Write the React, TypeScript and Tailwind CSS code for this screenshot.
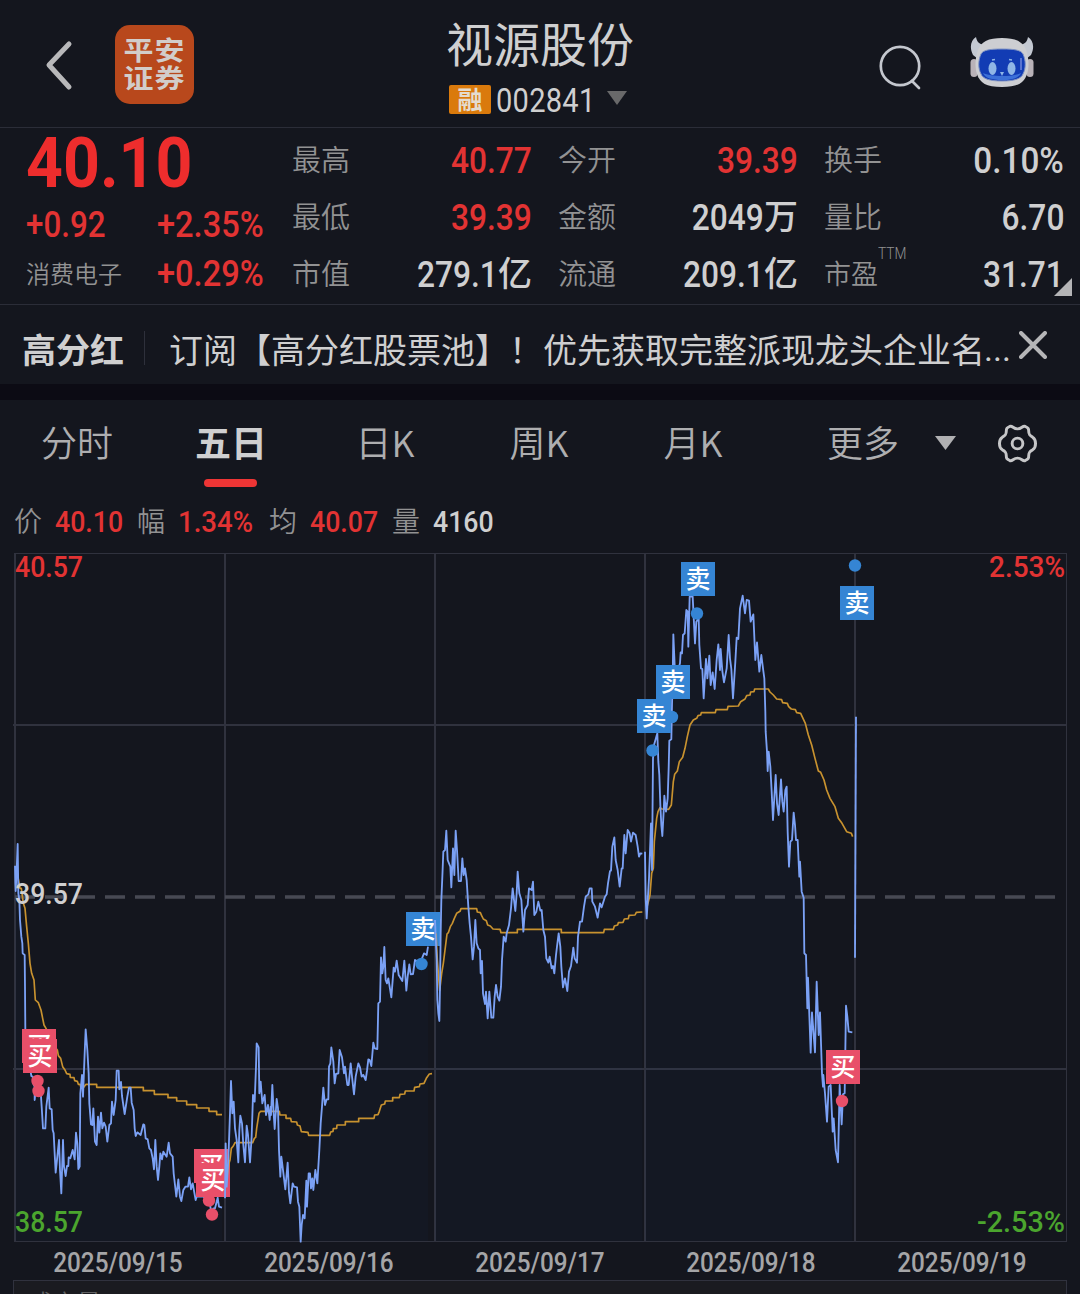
import type { ReactNode } from 'react';
import clsx from 'clsx';

type Tone = 'red' | 'white';

const TONES: Record<Tone, string> = {
  red: 'text-[#e23333]',
  white: 'text-[#cfcfd0]',
};

const STATS: { label: string; value: string; unit?: string; tone: Tone; sup?: string }[] = [
  { label: '最高', value: '40.77', tone: 'red' },
  { label: '今开', value: '39.39', tone: 'red' },
  { label: '换手', value: '0.10%', tone: 'white' },
  { label: '最低', value: '39.39', tone: 'red' },
  { label: '金额', value: '2049', unit: '万', tone: 'white' },
  { label: '量比', value: '6.70', tone: 'white' },
  { label: '市值', value: '279.1', unit: '亿', tone: 'white' },
  { label: '流通', value: '209.1', unit: '亿', tone: 'white' },
  { label: '市盈', value: '31.71', tone: 'white', sup: 'TTM' },
];

const TABS = ['分时', '五日', '日K', '周K', '月K'];

const DATES = ['2025/09/15', '2025/09/16', '2025/09/17', '2025/09/18', '2025/09/19'];

// Each session is stored in thirds of a pixel, relative to its own origin.
const SESSIONS = [
  {
    x: 0,
    y: 820,
    price:
      '45,137 46,190 47,213 50,150 53,72 55,220 58,240 60,300 64,350 67,370 68,400 74,405 75,500 76,627 80,700 92,755 94,768 98,770 100,790 104,800 104,840 108,800 122,815 125,860 129,925 136,925 139,860 146,803 149,865 155,868 158,930 161,940 164,1000 167,1058 172,1010 177,960 180,1050 184,1120 189,960 192,1040 197,1068 201,1038 205,1038 206,1012 211,1015 218,990 224,1018 228,938 232,970 235,1047 239,1040 241,820 246,765 249,830 254,700 257,628 262,690 266,760 268,850 273,913 277,915 280,865 285,965 290,975 294,890 298,938 303,878 307,925 312,908 317,920 322,965 328,915 333,910 336,845 341,885 347,840 350,752 356,752 358,808 363,786 366,828 374,882 382,830 387,803 392,803 395,848 401,870 404,925 407,948 412,937 422,945 430,913 433,915 437,955 443,958 448,985 453,990 458,1015 462,1048 466,960 470,1040 474,1080 478,1040 481,1000 486,1018 490,995 500,1010 506,968 510,1000 518,1010 521,1060 525,1095 529,1130 535,1078 540,1130 544,1143 550,1110 556,1100 564,1100 568,1072 573,1108 578,1090 587,1140 590,1130 610,1130 627,1140 635,1180 640,1165 645,1165 653,1133 657,1160 666,1163',
    avg: '52,160 60,205 64,205 70,250 75,265 80,320 85,370 90,430 95,460 102,480 106,540 115,548 123,570 128,595 132,615 138,625 150,650 160,675 172,690 175,707 182,715 188,740 195,750 200,761 210,763 211,772 222,773 224,782 232,784 235,793 240,793 243,803 250,803 258,793 290,793 290,802 430,802 430,812 463,812 463,823 504,823 504,833 530,833 530,843 560,843 560,854 590,854 590,864 627,864 627,874 650,874 650,884 666,884',
    marks: [
      { kind: 'buy', x: 22, y: 1029, dot: [37.5, 1081] },
      { kind: 'buy', x: 23, y: 1039, dot: [38.5, 1091] },
      { kind: 'buy', x: 194, y: 1149, dot: [209, 1200.5] },
      { kind: 'buy', x: 196, y: 1163, dot: [212, 1214.5] },
    ],
  },
  {
    x: 220,
    y: 820,
    price:
      '15,1135 17,970 20,1100 25,1020 30,880 33,783 37,880 41,845 45,925 50,960 55,1027 58,930 61,887 66,910 70,975 75,1027 80,917 84,945 90,1027 95,950 99,825 104,845 108,740 110,670 116,682 118,820 122,785 127,850 134,825 138,885 144,855 149,900 152,860 153,885 157,795 161,880 164,927 170,837 174,865 177,990 181,1070 184,1010 189,1050 196,1108 203,1028 207,1118 211,1150 218,1090 222,1100 231,1102 234,1145 238,1160 242,1265 245,1215 249,1185 254,1195 259,1082 261,1160 266,1060 270,1060 273,1105 277,1075 280,1110 286,1050 292,1090 298,990 302,910 306,860 310,803 315,855 320,838 325,838 327,740 331,730 334,682 340,725 344,790 348,762 355,760 359,690 366,712 372,760 375,740 382,795 386,795 392,730 396,770 402,823 407,770 415,730 420,742 425,770 430,765 437,780 441,752 445,718 449,720 454,738 460,668 464,685 472,687 475,550 480,545 483,412 487,460 490,440 493,381 497,480 501,490 505,475 514,532 521,443 525,455 530,422 536,465 547,483 553,422 559,512 563,470 568,433 572,463 579,462 585,420 600,430 612,400 620,405 624,380',
    avg: '20,1080 27,1030 30,1020 34,985 40,978 45,968 98,968 103,955 107,952 110,925 117,880 122,874 178,874 180,885 198,885 198,895 212,895 214,905 230,906 232,915 240,918 244,935 264,937 266,946 329,946 332,936 339,934 340,926 350,925 351,915 376,915 376,905 416,905 416,895 462,895 464,885 474,884 478,874 484,855 494,852 496,843 518,843 518,833 538,833 540,823 554,822 556,813 582,813 584,802 598,800 600,792 612,790 620,773 628,762 636,761',
    marks: [{ kind: 'sell', x: 406, y: 912, dot: [421.5, 964] }],
  },
  {
    x: 425,
    y: 800,
    price:
      '30,360 35,480 37,600 40,640 43,663 45,560 47,400 49,300 52,230 55,155 60,150 64,92 68,180 76,200 79,262 84,145 88,225 92,92 96,150 101,243 108,243 112,175 116,225 120,205 125,240 130,320 134,370 138,410 143,478 147,440 151,360 155,430 160,445 165,450 167,520 171,483 174,580 180,612 183,575 188,655 193,575 199,653 205,653 209,590 213,555 218,590 223,602 228,560 231,480 236,410 242,425 245,400 252,375 258,325 260,300 263,265 267,300 271,333 275,280 278,215 283,280 289,300 295,395 300,330 308,315 312,265 320,270 324,245 328,345 334,335 340,305 346,332 350,330 355,390 360,410 364,475 370,488 374,470 380,505 384,498 388,520 393,465 396,440 401,400 406,440 409,500 414,562 420,535 427,573 432,515 438,498 445,443 449,475 456,488 459,410 465,365 471,365 477,320 482,290 490,283 494,265 500,265 502,305 510,320 518,353 525,310 530,322 540,290 545,283 549,250 555,213 558,212 562,140 568,112 572,180 578,210 584,260 590,205 593,205 598,105 602,160 608,90 614,100 618,125 624,98 632,105 638,140 642,170 646,160 652,161',
    avg: '33,400 37,480 44,572 50,520 55,490 60,450 66,402 70,398 76,380 82,370 88,355 95,340 105,334 108,326 155,326 157,336 166,338 170,347 175,357 184,362 188,375 196,378 204,387 225,388 228,398 277,398 277,388 409,388 409,398 536,398 538,388 565,388 568,378 578,375 580,368 594,367 598,357 610,356 612,346 630,345 634,337 652,336',
    marks: [],
  },
  {
    x: 630,
    y: 545,
    price:
      '45,920 47,1060 50,1120 53,1070 57,1000 63,835 66,975 69,640 72,600 82,565 85,650 88,690 91,780 94,840 97,873 101,800 103,752 108,800 113,760 116,670 118,587 124,583 126,480 128,400 130,268 134,360 140,390 150,355 152,322 156,325 159,270 164,265 169,195 173,200 175,305 179,155 188,155 195,295 199,230 206,220 208,300 213,370 217,372 221,460 228,342 232,400 238,332 242,420 248,382 254,432 260,345 265,298 270,375 272,312 277,378 282,412 290,370 296,270 300,340 304,372 309,460 316,350 320,278 325,282 330,190 338,152 345,205 350,165 357,167 362,230 370,208 376,345 381,292 388,380 394,330 400,378 403,400 406,500 407,560 411,620 413,678 416,620 421,665 425,740 429,825 437,690 441,775 446,810 453,703 457,770 461,800 466,735 470,725 473,860 477,965 481,890 486,885 491,803 495,840 498,885 503,885 508,995 510,950 515,1040 521,1058 523,1225 528,1230 532,1390 534,1298 542,1523 546,1402 555,1522 560,1310 566,1470 570,1402 576,1585 579,1625 580,1590 585,1645 591,1730 596,1625 602,1620 608,1760 611,1720 617,1815 624,1852 629,1620 635,1738 639,1648 644,1645 646,1515 648,1382 652,1415 656,1460 667,1462',
    avg: '50,1090 60,1050 65,985 70,970 73,890 80,820 84,800 90,788 96,792 116,793 124,780 130,710 134,688 142,678 148,650 158,637 165,610 172,575 180,540 190,525 200,520 204,512 212,510 214,503 256,503 258,494 292,494 294,484 325,483 332,470 345,462 350,452 360,450 362,441 372,440 374,432 415,432 420,441 430,450 440,462 455,464 458,473 472,475 476,485 484,492 496,494 500,503 512,505 526,535 535,570 545,600 555,640 565,678 572,682 582,705 590,735 600,760 615,785 625,820 636,835 650,860 664,865 668,875',
    marks: [
      { kind: 'sell', x: 681, y: 562, dot: [697, 613.5] },
      { kind: 'sell', x: 656, y: 665, dot: [672, 717] },
      { kind: 'sell', x: 637, y: 699, dot: [652.5, 750.5] },
      { kind: 'buy', x: 826, y: 1050, dot: [842, 1101] },
    ],
  },
  {
    x: 630,
    y: 545,
    price: '678,515 675,1238',
    avg: '',
    marks: [{ kind: 'sell', x: 840, y: 586, dot: [855, 565.5] }],
  },
];

// Latin digits are squeezed horizontally to get the narrow DIN look.
function Num({ children, className }: { children: ReactNode; className?: string }) {
  return (
    <span className={clsx("inline-block whitespace-nowrap font-['Roboto'] leading-none", className)}>
      {children}
    </span>
  );
}

function RobotIcon() {
  return (
    <svg width="66" height="54" viewBox="0 0 66 54">
      <path d="M4 20C0 12 2 5 7 2c1 5 3 7 8 8l-6 14zM62 20c4-8 2-15-3-18-1 5-3 7-8 8l6 14z" fill="#c3c8d2" />
      <rect x="1.500" y="24" width="7" height="18" rx="3.500" fill="#b9b2b8" />
      <rect x="57.500" y="24" width="7" height="18" rx="3.500" fill="#b9b2b8" />
      <path
        d="M33 3c13 0 22 3 25 15 2 8 2 15 0 21-3 9-9 13-25 13S11 48 8 39c-2-6-2-13 0-21C11 6 20 3 33 3z"
        fill="#cdced2"
      />
      <path
        d="M33 14c12 0 19 1 21 5 3 7 3 14 0 20-2 5-9 7-21 7s-19-2-21-7c-3-6-3-13 0-20 2-4 9-5 21-5z"
        fill="#123cb4"
        stroke="#7f93c4"
        strokeWidth="1"
      />
      <path d="M14 38c8 4 30 4 38 0-2 5-9 7-19 7s-17-2-19-7z" fill="#3c70d8" />
      <ellipse cx="23.500" cy="33.500" rx="4" ry="6.500" fill="#8fb6e6" />
      <ellipse cx="42.500" cy="33.500" rx="4" ry="6.500" fill="#8fb6e6" />
      <path d="M23 25l3-.5M40 24.500l3 .5" stroke="#8fb6e6" strokeWidth="1.500" />
      <path d="M31 37h4l-2 4z" fill="#8fb6e6" />
      <path d="M52 23v12" stroke="#5873d0" strokeWidth="2" />
    </svg>
  );
}

function Header() {
  return (
    <header className="grid h-32 grid-cols-[1fr_auto_1fr] border-b border-[#2b2d38]">
      <div className="flex items-start pl-[44px] pt-[25px]">
        <svg width="30" height="79" viewBox="0 0 30 79" fill="none">
          <path d="M25 19L5 40l20 22" stroke="#b8b8ba" strokeWidth="5" strokeLinecap="round" strokeLinejoin="round" />
        </svg>
        <div className="ml-[41px] flex size-[79px] flex-col items-center justify-center rounded-[15px] bg-[#b8481c] pb-[3px] text-[30px] font-bold leading-[28px] tracking-[1px] text-[#d2cdca]">
          <span className="h-[28px] origin-center scale-y-[0.88]">平安</span>
          <span className="h-[28px] origin-center scale-y-[0.88]">证券</span>
        </div>
      </div>
      <div className="flex flex-col items-center pt-[13px]">
        <h1 className="text-[47px] leading-[58px] text-[#cfcfd0]">视源股份</h1>
        <div className="mt-[14px] flex h-[29px] w-[182px] items-center">
          <span className="flex h-[29px] w-[42px] shrink-0 items-center justify-center rounded-[2px] bg-[#da7a0c] pb-[3px] text-[25px] font-bold leading-none text-[#e4dcd0]">
            融
          </span>
          <Num className="ml-[5px] w-[110px] origin-left translate-y-[1px] scale-x-[0.88] text-[33px] font-normal tracking-[0.3px] text-[#cfcfd0]">
            002841
          </Num>
          <svg className="-mt-[3px] shrink-0" width="22" height="14" viewBox="0 0 22 14">
            <path d="M1 0h20L11 14z" fill="#69696a" />
          </svg>
        </div>
      </div>
      <div className="flex items-start justify-end pr-[45px] pt-[35px]">
        <svg className="mt-[6px]" width="46" height="50" viewBox="0 0 46 50" fill="none" stroke="#c4c7ce" strokeWidth="2.700">
          <circle cx="23" cy="25" r="19.200" />
          <path d="M35 40l7 7" strokeLinecap="round" />
        </svg>
        <div className="ml-[46px]">
          <RobotIcon />
        </div>
      </div>
    </header>
  );
}

function Quote() {
  return (
    <section className="relative flex h-[177px] border-b border-[#2b2d38]">
      <div className="w-[292px] shrink-0 pl-[26px]">
        <Num className="origin-left scale-x-[0.92] text-[70px] font-bold text-[#ee2d2d]">40.10</Num>
        <div className="mt-[9px] grid grid-cols-[131px_1fr] items-center gap-y-[13px]">
          <Num className="origin-left scale-x-[0.87] text-[36px] font-medium text-[#e23333]">+0.92</Num>
          <Num className="origin-left scale-x-[0.905] text-[36px] font-medium text-[#e23333]">+2.35%</Num>
          <span className="-mt-[2px] text-[24px] font-[350] leading-none text-[#929293]">消费电子</span>
          <Num className="origin-left scale-x-[0.905] text-[36px] font-medium text-[#e23333]">+0.29%</Num>
        </div>
      </div>
      <dl className="grid h-[175px] w-[772px] grid-cols-[240px_240px_240px] grid-rows-[57px_57px_57px] gap-x-[26px] pt-[3px]">
        {STATS.map((s) => (
          <div key={s.label} className="flex items-center justify-between leading-none">
            <dt className="flex -translate-y-[1px] text-[29px] font-[350] text-[#929293]">
              <span className={clsx(s.sup && 'text-[27px]')}>{s.label}</span>
              {s.sup && (
                <Num className="-mt-[13px] h-0 w-0 origin-left scale-x-[0.86] text-[16px] font-light text-[#929293]">
                  {s.sup}
                </Num>
              )}
            </dt>
            <dd className={clsx('flex items-center', TONES[s.tone])}>
              <Num
                className={clsx(
                  'origin-right translate-y-[1px] text-[36px] font-medium',
                  s.value.endsWith('%') ? 'scale-x-[0.925]' : 'scale-x-[0.88]',
                )}
              >
                {s.value}
              </Num>
              {s.unit && <span className="-translate-y-[2px] text-[34px] font-medium">{s.unit}</span>}
            </dd>
          </div>
        ))}
      </dl>
      <svg className="absolute bottom-[8px] right-[8px]" width="18" height="18" viewBox="0 0 18 18">
        <path d="M18 0v18H0z" fill="#b4b4b6" />
      </svg>
    </section>
  );
}

function Banner() {
  return (
    <section className="flex h-[79px] items-center pl-[22px] text-[34px] leading-none text-[#cfcfd0]">
      <strong className="mt-[8px] w-[122px] shrink-0 font-bold">高分红</strong>
      <span className="mt-[6px] h-[34px] w-px shrink-0 bg-[#2e303b]" />
      <p className="ml-[24px] mt-[9px] flex whitespace-nowrap">
        订阅【高分红股票池】！优先获取完整派现龙头企业名
        <span className="-ml-[1px] font-['Roboto']">...</span>
      </p>
      <svg className="ml-auto mr-[33px] shrink-0" width="28" height="28" viewBox="0 0 28 28">
        <path d="M2 2l24 24M26 2L2 26" stroke="#b6b6b8" strokeWidth="4" strokeLinecap="round" />
      </svg>
    </section>
  );
}

function Tabs() {
  return (
    <nav className="flex h-[87px] text-[36px] leading-none">
      {TABS.map((tab) => {
        const active = tab === '五日';
        return (
          <div
            key={tab}
            className={clsx(
              'flex w-[154px] flex-col items-center justify-between pt-[23px]',
              active ? 'font-bold text-[#cfcfd0]' : 'font-[350] text-[#aeaeb0]',
            )}
          >
            <span>{tab}</span>
            {active && <span className="mr-px h-2 w-[53px] rounded-full bg-[#ee3535]" />}
          </div>
        );
      })}
      <div className="ml-[57px] flex h-[87px] items-center text-[#aeaeb0]">
        <span className="-mt-[5px] font-[350]">更多</span>
        <svg className="-mt-px ml-[36px]" width="21" height="14" viewBox="0 0 21 14">
          <path d="M0 0h21L10.500 14z" fill="#b0b0b2" />
        </svg>
        <svg className="ml-[42px]" width="39" height="39" viewBox="0 0 40 40" fill="none" stroke="#c6c6c8" strokeWidth="3">
          <path
            d="M12 2.500C15 1.500 15.500 5 20 5s5-3.500 8-2.500c3 1.500 3.500 2 3.500 5 0 3.500 1 4.500 4 6 2.500 1.500 3 3 3 6.500s-.5 5-3 6.500c-3 1.500-4 2.500-4 6 0 3-.5 3.500-3.500 5-3 1-3.500-2.500-8-2.500s-5 3.500-8 2.500c-3-1.500-3.500-2-3.500-5 0-3.500-1-4.500-4-6-2.500-1.500-3-3-3-6.500s.5-5 3-6.500c3-1.500 4-2.500 4-6 0-3 .5-3.500 3.500-5z"
            strokeLinejoin="round"
          />
          <circle cx="20" cy="20" r="5.500" />
        </svg>
      </div>
    </nav>
  );
}

function InfoRow() {
  const items: { label: string; value: string; tone: Tone; width: string }[] = [
    { label: '价', value: '40.10', tone: 'red', width: 'w-[123px]' },
    { label: '幅', value: '1.34%', tone: 'red', width: 'w-[132px]' },
    { label: '均', value: '40.07', tone: 'red', width: 'w-[123px]' },
    { label: '量', value: '4160', tone: 'white', width: 'w-[110px]' },
  ];
  return (
    <div className="flex h-[66px] items-center pl-[14px]">
      {items.map((it) => (
        <div key={it.label} className={clsx('flex shrink-0 items-center', it.width)}>
          <span className="w-[41px] shrink-0 text-[28px] font-[350] leading-none text-[#929293]">{it.label}</span>
          <Num
            className={clsx(
              'origin-left translate-y-[2px] text-[30px] font-medium',
              it.value.endsWith('%') ? 'scale-x-[0.92]' : 'scale-x-[0.89]',
              TONES[it.tone],
            )}
          >
            {it.value}
          </Num>
        </div>
      ))}
    </div>
  );
}

function Mark({ kind, x, y, dot }: { kind: string; x: number; y: number; dot: number[] }) {
  const fill = kind === 'buy' ? '#e84f69' : '#3585d4';
  return (
    <g>
      <circle cx={dot[0]} cy={dot[1]} r="6.200" fill={fill} />
      <rect x={x} y={y} width="34" height="34" fill={fill} />
      <text x={x + 17} y={y + 26} textAnchor="middle" fill="#fff" className="text-[25px] font-medium">
        {kind === 'buy' ? '买' : '卖'}
      </text>
    </g>
  );
}

function AxisLabel({
  x,
  y,
  width,
  end,
  fill,
  children,
}: {
  x: number;
  y: number;
  width: number;
  end?: boolean;
  fill: string;
  children: string;
}) {
  return (
    <text
      x={x}
      y={y}
      fill={fill}
      textAnchor={end ? 'end' : 'start'}
      textLength={width}
      lengthAdjust="spacingAndGlyphs"
      className="font-['Roboto'] text-[30px] font-medium"
    >
      {children}
    </text>
  );
}

function Chart() {
  return (
    <svg className="block overflow-visible" width="1080" height="691" viewBox="0 552 1080 691" fill="none">
      <g stroke="#30323e">
        <path d="M14 553.5H1067M14 1241.5H1067M1066.500 553V1242" />
        <path d="M15 553V1242M225 553V1242M435 553V1242M645 553V1242M855 553V1242M13 725H1067M13 1069H1067" strokeWidth="2" />
      </g>
      <g stroke="#474953" strokeWidth="3.500" strokeDasharray="20 10">
        {[15, 225, 435, 645, 855].map((x) => (
          <path key={x} d={`M${x} 897h210`} />
        ))}
      </g>
      {/* sessions are painted in order, so an opening dip runs over the badges of the day before */}
      {SESSIONS.map((s, i) => {
        const bottom = (1241 - s.y) * 3;
        const points = s.price.split(' ');
        const first = points[0].split(',')[0];
        const last = points[points.length - 1].split(',')[0];
        return (
          <g key={i}>
            <g transform={`translate(${s.x} ${s.y}) scale(${1 / 3})`} strokeLinejoin="round">
              {i < 4 && (
                <polygon points={`${first},${bottom} ${s.price} ${last},${bottom}`} fill="#1450b4" fillOpacity="0.04" />
              )}
              <polyline points={s.avg} stroke="#c8922f" strokeWidth="5" />
              <polyline points={s.price} stroke="#7ba1f5" strokeWidth="5.500" />
            </g>
            {s.marks.map((m) => (
              <Mark key={`${m.x}-${m.y}`} {...m} />
            ))}
          </g>
        );
      })}
      <AxisLabel x={15} y={577} width={68} fill="#e23333">40.57</AxisLabel>
      <AxisLabel x={15} y={904} width={68} fill="#cfcfd0">39.57</AxisLabel>
      <AxisLabel x={15} y={1232} width={68} fill="#4ba52e">38.57</AxisLabel>
      <AxisLabel x={1065} y={577} width={76} end fill="#e23333">2.53%</AxisLabel>
      <AxisLabel x={1065} y={1232} width={88} end fill="#4ba52e">-2.53%</AxisLabel>
    </svg>
  );
}

export default function App() {
  return (
    <div className="h-[1294px] w-[1080px] overflow-hidden bg-[#14161e] font-['Noto_Sans_CJK_SC',sans-serif]">
      <Header />
      <Quote />
      <Banner />
      <div className="h-4 bg-[#0c0b14]" />
      <Tabs />
      <InfoRow />
      <div className="-mt-px">
        <Chart />
      </div>
      <div className="flex h-[37px] gap-px pl-[13px]">
        {DATES.map((d) => (
          <div key={d} className="flex w-[210px] items-center justify-center">
            <Num className="translate-y-[2px] scale-x-[0.9] text-[27px] font-medium text-[#a5a5a7]">{d}</Num>
          </div>
        ))}
      </div>
      <div className="ml-[13px] h-[60px] w-[1054px] border border-[#30323e] bg-[#1a1b20] pl-[15px] pt-[9px] text-[24px] font-[350] leading-none text-[#606062]">
        成交量
      </div>
    </div>
  );
}
